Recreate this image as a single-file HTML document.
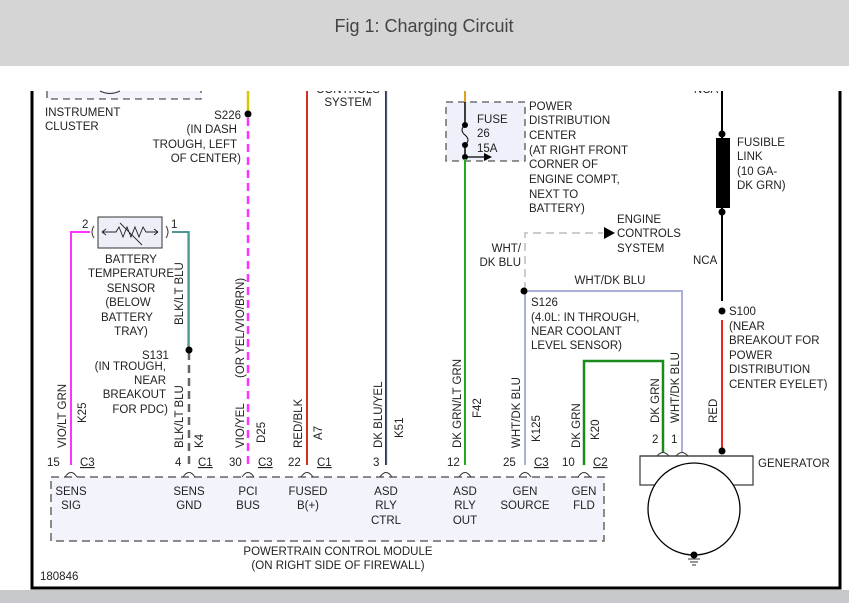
<!DOCTYPE html>
<html><head><meta charset="utf-8">
<style>
html,body{margin:0;padding:0;width:849px;height:603px;overflow:hidden;background:#fff;}
svg{display:block}
text{font-family:"Liberation Sans",sans-serif;font-size:11.5px;fill:#222;}
</style></head><body>
<svg width="849" height="603" viewBox="0 0 849 603" xmlns="http://www.w3.org/2000/svg">
<defs><clipPath id="cp"><rect x="0" y="91" width="849" height="520"/></clipPath></defs>
<rect x="0" y="0" width="849" height="66" fill="#d5d5d5"/>
<text x="424" y="32" text-anchor="middle" style="font-size:18px;fill:#444">Fig 1: Charging Circuit</text>
<rect x="0" y="590" width="849" height="13" fill="#c6c8cb"/>
<g clip-path="url(#cp)"><text x="348" y="93" text-anchor="middle">CONTROLS</text><text x="706" y="93" text-anchor="middle">NCA</text></g>
<path d="M32 91V588H840V91" fill="none" stroke="#000" stroke-width="3"/>
<rect x="47" y="91" width="154" height="8" fill="#f3f4fb"/>
<path d="M47 91V99H201V91" fill="none" stroke="#555" stroke-width="1.3" stroke-dasharray="7,5"/>
<path d="M100 91Q110 96 120 91" fill="none" stroke="#333"/>
<text x="45" y="116">INSTRUMENT</text><text x="45" y="130">CLUSTER</text>
<text x="241" y="119" text-anchor="end">S226</text>
<text x="237" y="133" text-anchor="end">(IN DASH</text>
<text x="237" y="148" text-anchor="end">TROUGH, LEFT</text>
<text x="241" y="162" text-anchor="end">OF CENTER)</text>
<text x="348" y="106" text-anchor="middle">SYSTEM</text>
<path d="M71 465V232H90" fill="none" stroke="#ff33ff" stroke-width="2"/>
<path d="M172 232H189V350" fill="none" stroke="#30c8c8" stroke-width="2"/>
<path d="M172 232H188V350" fill="none" stroke="#666" stroke-width="1"/>
<path d="M189 352V465" fill="none" stroke="#666" stroke-width="2.5" stroke-dasharray="8,5"/>
<circle cx="189" cy="350" r="3.5" fill="#000"/>
<path d="M248 91V112" stroke="#d8c800" stroke-width="2.5"/>
<path d="M248 118V465" stroke="#ff33ff" stroke-width="2.5" stroke-dasharray="8,5"/>
<circle cx="248" cy="114" r="3.5" fill="#000"/>
<path d="M307 91V465" stroke="#d03020" stroke-width="2"/>
<path d="M386 91V465" stroke="#1a2a9a" stroke-width="2"/>
<path d="M387 91V465" stroke="#c8c040" stroke-width="0.7"/>
<rect x="446" y="102" width="79" height="59" fill="#eef0fa" stroke="#555" stroke-width="1.3" stroke-dasharray="7,5"/>
<path d="M465 91V102" stroke="#e0a020" stroke-width="2"/>
<path d="M465 102V125M465 145V157" stroke="#000" stroke-width="1.5"/>
<path d="M465 125Q459 130 465 135Q471 140 465 145" fill="none" stroke="#000" stroke-width="1"/>
<circle cx="465" cy="125" r="3" fill="#000"/><circle cx="465" cy="145" r="3" fill="#000"/><circle cx="465" cy="157" r="3" fill="#000"/>
<path d="M465 157H485" stroke="#000" stroke-width="1.2"/><path d="M484 153L492 157L484 161Z" fill="#000"/>
<path d="M465 159V465" stroke="#22aa22" stroke-width="2"/>
<text x="477" y="123">FUSE</text><text x="477" y="137">26</text><text x="477" y="152">15A</text>
<text x="529" y="110">POWER</text><text x="529" y="124">DISTRIBUTION</text><text x="529" y="139">CENTER</text><text x="529" y="154">(AT RIGHT FRONT</text><text x="529" y="168">CORNER OF</text><text x="529" y="183">ENGINE COMPT,</text><text x="529" y="198">NEXT TO</text><text x="529" y="212">BATTERY)</text>
<path d="M525 290V233H603" fill="none" stroke="#ccc" stroke-width="2" stroke-dasharray="8,5"/>
<path d="M604 227L615 233L604 239Z" fill="#000"/>
<text x="617" y="223">ENGINE</text><text x="617" y="237">CONTROLS</text><text x="617" y="252">SYSTEM</text>
<text x="521" y="252" text-anchor="end">WHT/</text><text x="521" y="266" text-anchor="end">DK BLU</text>
<text x="610" y="284" text-anchor="middle">WHT/DK BLU</text>
<path d="M525 465V291H682V452" fill="none" stroke="#aab0d8" stroke-width="2"/>
<circle cx="524" cy="291" r="3.5" fill="#000"/>
<text x="531" y="306">S126</text><text x="531" y="321">(4.0L: IN THROUGH,</text><text x="531" y="335">NEAR COOLANT</text><text x="531" y="349">LEVEL SENSOR)</text>
<path d="M584 465V361H663V452" fill="none" stroke="#1a8a1a" stroke-width="2.5"/>
<path d="M722 91V301" stroke="#000" stroke-width="2"/>
<rect x="716" y="138" width="14" height="70" fill="#000"/>
<circle cx="722" cy="134" r="3.5" fill="#000"/><circle cx="722" cy="212" r="3.5" fill="#000"/>
<circle cx="722" cy="311" r="3.5" fill="#000"/>
<path d="M722 320V451" stroke="#ee2222" stroke-width="2"/>
<circle cx="722" cy="451" r="3.5" fill="#000"/>
<text x="737" y="146">FUSIBLE</text><text x="737" y="160">LINK</text><text x="737" y="175">(10 GA-</text><text x="737" y="189">DK GRN)</text>
<text x="693" y="264">NCA</text>
<text x="729" y="315">S100</text><text x="729" y="330">(NEAR</text><text x="729" y="344">BREAKOUT FOR</text><text x="729" y="359">POWER</text><text x="729" y="373">DISTRIBUTION</text><text x="729" y="388">CENTER EYELET)</text>
<rect x="640" y="456" width="113" height="29" fill="#fff" stroke="#444" stroke-width="1.3"/>
<circle cx="694" cy="509" r="46" fill="#fff" stroke="#000" stroke-width="1.3"/>
<path d="M640 456H753" stroke="#444" stroke-width="1.3"/>
<circle cx="694" cy="555" r="3.5" fill="#000"/>
<path d="M688 559H700M690 562H698M692 565H696" stroke="#333"/>
<path d="M657 456Q663 449 669 456M676 456Q682 449 688 456" fill="none" stroke="#333"/>
<text x="758" y="467">GENERATOR</text>
<text x="652" y="443">2</text><text x="671" y="443">1</text>
<rect x="98" y="217" width="64" height="31" fill="#eceef8" stroke="#333" stroke-width="1"/>
<path d="M102 232H116L119 227L123 237L127 227L131 237L135 227L139 237L143 227L146 232H158M102 232L106 229M102 232L106 235M158 232L154 229M158 232L154 235M120 223L142 245" fill="none" stroke="#222" stroke-width="0.9"/>
<path d="M94 226Q90 232 94 238M166 226Q170 232 166 238" fill="none" stroke="#333"/>
<text x="82" y="228">2</text><text x="171" y="228">1</text>
<g text-anchor="middle"><text x="131" y="263">BATTERY</text><text x="131" y="277">TEMPERATURE</text><text x="131" y="292">SENSOR</text><text x="128" y="306">(BELOW</text><text x="127" y="321">BATTERY</text><text x="131" y="335">TRAY)</text></g>
<text x="142" y="359">S131</text>
<g text-anchor="end"><text x="166" y="370">(IN TROUGH,</text><text x="166" y="384">NEAR</text><text x="166" y="398">BREAKOUT</text><text x="168" y="413">FOR PDC)</text></g>
<g>
<text transform="translate(66,448) rotate(-90)">VIO/LT GRN</text>
<text transform="translate(86,423) rotate(-90)">K25</text>
<text transform="translate(183,448) rotate(-90)">BLK/LT BLU</text>
<text transform="translate(183,325) rotate(-90)">BLK/LT BLU</text>
<text transform="translate(203,448) rotate(-90)">K4</text>
<text transform="translate(244,448) rotate(-90)">VIO/YEL</text>
<text transform="translate(244,378) rotate(-90)">(OR YEL/VIO/BRN)</text>
<text transform="translate(265,443) rotate(-90)">D25</text>
<text transform="translate(302,448) rotate(-90)">RED/BLK</text>
<text transform="translate(322,440) rotate(-90)">A7</text>
<text transform="translate(382,448) rotate(-90)">DK BLU/YEL</text>
<text transform="translate(403,438) rotate(-90)">K51</text>
<text transform="translate(461,448) rotate(-90)">DK GRN/LT GRN</text>
<text transform="translate(481,418) rotate(-90)">F42</text>
<text transform="translate(520,448) rotate(-90)">WHT/DK BLU</text>
<text transform="translate(540,442) rotate(-90)">K125</text>
<text transform="translate(580,448) rotate(-90)">DK GRN</text>
<text transform="translate(599,440) rotate(-90)">K20</text>
<text transform="translate(659,423) rotate(-90)">DK GRN</text>
<text transform="translate(679,423) rotate(-90)">WHT/DK BLU</text>
<text transform="translate(717,423) rotate(-90)">RED</text>
</g>
<text x="80" y="466" text-decoration="underline">C3</text><text x="198" y="466" text-decoration="underline">C1</text><text x="258" y="466" text-decoration="underline">C3</text><text x="317" y="466" text-decoration="underline">C1</text><text x="534" y="466" text-decoration="underline">C3</text><text x="593" y="466" text-decoration="underline">C2</text>
<text x="47" y="466">15</text><text x="175" y="466">4</text><text x="229" y="466">30</text><text x="288" y="466">22</text><text x="373" y="466">3</text><text x="447" y="466">12</text><text x="503" y="466">25</text><text x="562" y="466">10</text>
<rect x="51" y="477" width="553" height="64" fill="#f2f3fb" stroke="#666" stroke-width="1.5" stroke-dasharray="8,5"/>
<g fill="none" stroke="#333">
<path d="M65 477Q71 468 77 477M183 477Q189 468 195 477M242 477Q248 468 254 477M301 477Q307 468 313 477M380 477Q386 468 392 477M459 477Q465 468 471 477M519 477Q525 468 531 477M578 477Q584 468 590 477"/>
</g>
<g text-anchor="middle">
<text x="71" y="495">SENS</text><text x="71" y="509">SIG</text>
<text x="189" y="495">SENS</text><text x="189" y="509">GND</text>
<text x="248" y="495">PCI</text><text x="248" y="509">BUS</text>
<text x="308" y="495">FUSED</text><text x="308" y="509">B(+)</text>
<text x="386" y="495">ASD</text><text x="386" y="509">RLY</text><text x="386" y="524">CTRL</text>
<text x="465" y="495">ASD</text><text x="465" y="509">RLY</text><text x="465" y="524">OUT</text>
<text x="525" y="495">GEN</text><text x="525" y="509">SOURCE</text>
<text x="584" y="495">GEN</text><text x="584" y="509">FLD</text>
<text x="338" y="555">POWERTRAIN CONTROL MODULE</text>
<text x="338" y="569">(ON RIGHT SIDE OF FIREWALL)</text>
</g>
<text x="40" y="580">180846</text>
</svg>
</body></html>
